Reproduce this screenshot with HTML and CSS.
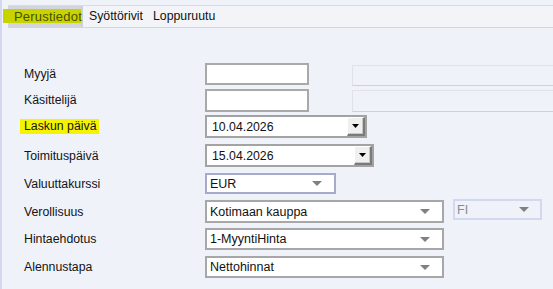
FILE: index.html
```html
<!DOCTYPE html>
<html lang="fi">
<head>
<meta charset="utf-8">
<link rel="stylesheet" href="styles.css">
</head>
<body>
<div class="page">
  <div class="tabs">
    <div class="tab selected"><span class="mark"></span><span class="tab-text">Perustiedot</span></div>
    <div class="tab t2">Syöttörivit</div>
    <div class="tab t3">Loppuruutu</div>
  </div>
  <div class="form">
    <div class="row r1">
      <div class="label">Myyjä</div>
      <div class="ctrls"><div class="input small"></div><div class="input disabled"></div></div>
    </div>
    <div class="row r2">
      <div class="label">Käsittelijä</div>
      <div class="ctrls"><div class="input small tall"></div><div class="input disabled"></div></div>
    </div>
    <div class="row r3">
      <div class="label"><span class="hl">Laskun päivä</span></div>
      <div class="ctrls"><div class="date d1"><span class="val">10.04.2026</span><span class="btn"><svg width="7" height="4" viewBox="0 0 7 4"><path d="M0 0H7L3.5 4Z" fill="#000"/></svg></span></div></div>
    </div>
    <div class="row r4">
      <div class="label">Toimituspäivä</div>
      <div class="ctrls"><div class="date d2"><span class="val">15.04.2026</span><span class="btn"><svg width="7" height="4" viewBox="0 0 7 4"><path d="M0 0H7L3.5 4Z" fill="#000"/></svg></span></div></div>
    </div>
    <div class="row r5">
      <div class="label">Valuuttakurssi</div>
      <div class="ctrls"><div class="select cur"><span>EUR</span><i class="arrow"></i></div></div>
    </div>
    <div class="row r6">
      <div class="label">Verollisuus</div>
      <div class="ctrls"><div class="select wide"><span>Kotimaan kauppa</span><i class="arrow"></i></div><div class="select fi"><span>FI</span><i class="arrow"></i></div></div>
    </div>
    <div class="row r7">
      <div class="label">Hintaehdotus</div>
      <div class="ctrls"><div class="select wide h22"><span>1-MyyntiHinta</span><i class="arrow"></i></div></div>
    </div>
    <div class="row r8">
      <div class="label">Alennustapa</div>
      <div class="ctrls"><div class="select wide h22"><span>Nettohinnat</span><i class="arrow"></i></div></div>
    </div>
  </div>
</div>
</body>
</html>
```

FILE: styles.css
```css
html, body {
  margin: 0;
  padding: 0;
  width: 553px;
  height: 289px;
  overflow: hidden;
  background: #eff2f9;
}
.page {
  height: 289px;
  border-left: 2px solid #d3d8f0;
  box-sizing: border-box;
  font-family: "Liberation Sans", Arial, sans-serif;
  color: #111;
  padding-top: 5px;
}
.tabs {
  margin-left: 6px;
  height: 21px;
  display: flex;
  align-items: stretch;
  border-top: 1px solid #d8dbe2;
  border-bottom: 1px solid #d3d6de;
  background: #f3f4f8;
}
.tab {
  font-size: 12.3px;
  line-height: 21px;
  color: #111;
}
.tab.selected {
  position: relative;
  width: 75px;
  box-sizing: border-box;
  background: #d2d5dc;
  border-right: 2px solid #cdd0d8;
  padding-left: 6px;
  font-size: 13px;
}
.mark {
  position: absolute;
  left: -5px;
  top: 3px;
  width: 78px;
  height: 14px;
  background: #c8d400;
}
.tab-text {
  position: relative;
  color: #4a4f00;
  letter-spacing: 0.2px;
}
.t2 { margin-left: 6px; }
.t3 { margin-left: 10px; }

.form {
  margin-top: 35px;
  display: grid;
  grid-template-rows: 26px 26px 29px 29px 27px 28px 28px 28px;
}
.row {
  display: grid;
  grid-template-columns: 181px 1fr;
  align-items: start;
  padding-left: 22px;
}
.label {
  font-size: 12.3px;
  height: 22px;
  display: flex;
  align-items: center;
  color: #141414;
}
.r3 .label, .r4 .label { height: 23px; }
.r5 .label { height: 21px; }
.r6 .label { height: 24px; }
.hl {
  background: #f4f400;
  margin-left: -4px;
  padding: 0 3px 0 4px;
  line-height: 15px;
}
.ctrls {
  display: flex;
  align-items: start;
  min-width: 0;
  overflow: hidden;
}
.input {
  box-sizing: border-box;
  height: 22px;
  background: #fff;
  border: 2px solid #a9a9a9;
  flex: none;
}
.input.small { width: 104px; }
.input.tall { height: 23px; }
.input.disabled {
  flex: 1;
  margin-right: -4px;
  height: 21px;
  margin-left: 43px;
  margin-top: 2px;
  background: #eff2f9;
  border: 1px solid #e0e2e8;
  border-bottom: 1px solid #c8d0ea;
}
.r2 .input.disabled { height: 22px; margin-top: 1px; }

.date {
  box-sizing: border-box;
  height: 23px;
  background: #fff;
  border: 2px solid #a3a3a3;
  display: flex;
  align-items: center;
  justify-content: space-between;
  font-size: 12.3px;
  flex: none;
}
.d1 { width: 162px; }
.d2 { width: 169px; }
.val { padding-left: 5px; }
.btn {
  box-sizing: border-box;
  width: 18px;
  height: 19px;
  background: #f0f0f0;
  border-top: 1px solid #fff;
  border-left: 1px solid #fff;
  border-right: 2px solid #7a7a7a;
  border-bottom: 2px solid #7a7a7a;
  box-shadow: inset -1px -1px 0 #c8c8c8;
  display: flex;
  align-items: center;
  justify-content: center;
}
.select {
  box-sizing: border-box;
  height: 23px;
  background: #fff;
  border: 2px solid #a7a7a9;
  display: flex;
  align-items: center;
  justify-content: space-between;
  font-size: 12.5px;
  padding-left: 3px;
  padding-right: 12px;
  flex: none;
}
.select.cur {
  width: 131px;
  height: 21px;
  border-color: #a7aac8;
}
.select.wide { width: 239px; }
.select.h22 { height: 22px; }
.r6 .ctrls { padding-top: 1px; overflow: visible; }
.r6 .select.wide { margin-top: -1px; }
.select.fi {
  width: 89px;
  height: 21px;
  margin-left: 9px;
  margin-top: -2px;
  background: #eff2f9;
  border: 2px solid #d2d8ee;
  color: #8a8a8a;
  padding-left: 2px;
  padding-right: 11px;
}
.arrow {
  width: 0;
  height: 0;
  border-left: 5px solid transparent;
  border-right: 5px solid transparent;
  border-top: 5px solid #808080;
}
```
